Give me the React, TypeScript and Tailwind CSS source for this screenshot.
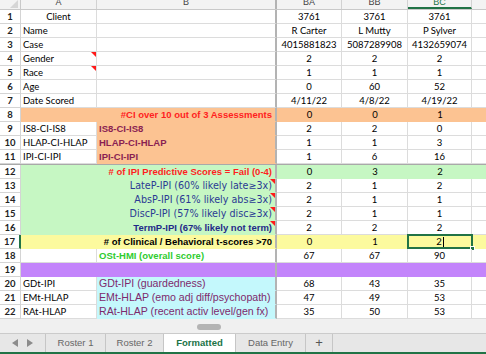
import React from 'react';

// column template: row numbers, A, B (frozen edge), BA, BB, BC, next column
const GRID = 'grid grid-cols-[21px_76px_180px_65px_66px_64px_1fr]';
const CAL = "font-['Lato',sans-serif]";
const ARL = "font-['Liberation_Sans',Arial,sans-serif]";

type Row = {
    n: number;
    a?: string;
    aCenter?: boolean;
    ab?: string; // text for merged A:B
    abCls?: string;
    abBg?: string;
    b?: string;
    bCls?: string;
    bBg?: string;
    fill?: string; // whole row background
    vals?: string[];
    triA?: boolean;
    triB?: boolean;
    sel?: boolean;
};

const NAVY = "text-[#2b3a93] font-['DejaVu_Sans',sans-serif] text-[9.6px]";
const MAROON = `text-[#7e2a6c] text-[10.6px] ${ARL}`;
const RED = `text-[#ff1f1f] font-bold ${ARL}`;
const PLUM = `text-[#8a1f52] font-bold ${ARL}`;

const rows: Row[] = [
    { n: 1, a: 'Client', aCenter: true, vals: ['3761', '3761', '3761'] },
    { n: 2, a: 'Name', vals: ['R Carter', 'L Mutty', 'P Sylver'] },
    { n: 3, a: 'Case', vals: ['4015881823', '5087289908', '4132659074'] },
    { n: 4, a: 'Gender', triA: true, vals: ['2', '2', '2'] },
    { n: 5, a: 'Race', triA: true, vals: ['1', '1', '1'] },
    { n: 6, a: 'Age', vals: ['0', '60', '52'] },
    { n: 7, a: 'Date Scored', vals: ['4/11/22', '4/8/22', '4/19/22'] },
    { n: 8, ab: '#CI over 10 out of 3 Assessments', abCls: RED, fill: 'bg-[#fcc392]', vals: ['0', '0', '1'] },
    { n: 9, a: 'IS8-CI-IS8', b: 'IS8-CI-IS8', bCls: PLUM, bBg: 'bg-[#fcc392]', vals: ['2', '2', '0'] },
    { n: 10, a: 'HLAP-CI-HLAP', b: 'HLAP-CI-HLAP', bCls: PLUM, bBg: 'bg-[#fcc392]', vals: ['1', '1', '3'] },
    { n: 11, a: 'IPI-CI-IPI', b: 'IPI-CI-IPI', bCls: PLUM, bBg: 'bg-[#fcc392]', vals: ['1', '6', '16'] },
    { n: 12, ab: '# of IPI Predictive Scores = Fail (0-4)', abCls: RED, fill: 'bg-[#c6f7c3]', vals: ['0', '3', '2'] },
    { n: 13, ab: 'LateP-IPI (60% likely late≥3x)', abCls: NAVY, abBg: 'bg-[#c6f7c3]', triB: true, vals: ['2', '1', '2'] },
    { n: 14, ab: 'AbsP-IPI (61% likely abs≥3x)', abCls: NAVY, abBg: 'bg-[#c6f7c3]', triB: true, vals: ['2', '1', '1'] },
    { n: 15, ab: 'DiscP-IPI (57% likely disc≥3x)', abCls: NAVY, abBg: 'bg-[#c6f7c3]', triB: true, vals: ['2', '1', '1'] },
    { n: 16, ab: 'TermP-IPI (67% likely not term)', abCls: `text-[#1f2a88] font-bold ${ARL}`, abBg: 'bg-[#c6f7c3]', triB: true, vals: ['2', '2', '2'] },
    { n: 17, ab: '# of Clinical / Behavioral t-scores >70', abCls: `text-black font-bold ${ARL}`, fill: 'bg-[#fcfa9e]', vals: ['0', '1', '2'], sel: true },
    { n: 18, b: 'OSt-HMI (overall score)', bCls: `text-[#2fcc2f] font-bold ${ARL}`, vals: ['67', '67', '90'] },
    { n: 19, fill: 'bg-[#c384fb]', ab: '' },
    { n: 20, a: 'GDt-IPI', b: 'GDt-IPI (guardedness)', bCls: MAROON, bBg: 'bg-[#c4f8fc]', vals: ['68', '43', '35'] },
    { n: 21, a: 'EMt-HLAP', b: 'EMt-HLAP (emo adj diff/psychopath)', bCls: MAROON, bBg: 'bg-[#c4f8fc]', vals: ['47', '49', '53'] },
    { n: 22, a: 'RAt-HLAP', b: 'RAt-HLAP (recent activ level/gen fx)', bCls: MAROON, bBg: 'bg-[#c4f8fc]', vals: ['35', '50', '53'] },
];

const Tri = () => (
    <div className="absolute right-0 top-0 w-0 h-0 border-t-[5px] border-l-[5px] border-t-[#ff1a1a] border-l-transparent" />
);

const SheetRow: React.FC<{ r: Row }> = ({ r }) => {
    const merged = r.ab !== undefined;
    const abBg = r.fill || r.abBg;
    return (
        <div className={`${GRID} h-[14px] text-[9.5px] leading-[13px]`}>
            <div className={`bg-white border-b border-[#d4d4d4] text-center font-bold text-[#222] ${CAL} ${r.sel ? 'border-r-2 border-r-[#217346]' : 'border-r'}`}>
                {r.n}
            </div>
            {merged ? (
                <div className={`relative col-span-2 border-b border-r-2 border-r-[#b3b3b3] text-right pr-[3px] whitespace-nowrap overflow-hidden ${r.abCls ?? ''} ${abBg ? `${abBg} border-b-transparent` : 'border-b-[#dcdcdc]'}`}>
                    {r.ab}
                    {r.triB && <Tri />}
                </div>
            ) : (
                <>
                    <div className={`relative border-b border-r border-[#dcdcdc] px-[2px] whitespace-nowrap text-black ${CAL} ${r.aCenter ? 'text-center' : ''}`}>
                        {r.a}
                        {r.triA && <Tri />}
                    </div>
                    <div className={`border-b border-r-2 border-r-[#b3b3b3] pl-[2px] whitespace-nowrap overflow-hidden ${r.bCls ?? ''} ${r.bBg ? `${r.bBg} border-b-transparent` : 'bg-white border-b-[#dcdcdc]'}`}>
                        {r.b}
                    </div>
                </>
            )}
            {[0, 1, 2].map((i) => (
                <div
                    key={i}
                    className={`relative text-center text-black whitespace-nowrap ${CAL} ${r.fill ? `${r.fill} border-b border-transparent` : 'bg-white border-b border-r border-[#dcdcdc]'}`}
                >
                    {r.sel && i === 2 ? (
                        <>
                            <span className="inline-flex items-center">
                                2<span className="inline-block w-px h-[10px] bg-black ml-px" />
                            </span>
                            <div className="absolute -left-px -top-px -right-px -bottom-px border-2 border-[#217346]" />
                            <div className="absolute -right-[3px] -bottom-[3px] w-[5px] h-[5px] bg-[#217346] border border-white" />
                        </>
                    ) : (
                        r.vals?.[i]
                    )}
                </div>
            ))}
            <div className={r.fill ? `${r.fill}` : 'bg-white border-b border-[#dcdcdc]'} />
        </div>
    );
};

const App: React.FC = () => {
    const headers = ['A', 'B', 'BA', 'BB', 'BC'];
    return (
        <div className="w-[486px] h-[354px] overflow-hidden bg-white flex flex-col select-none">
            {/* column header strip, cut at top */}
            <div className={`${GRID} h-[10px] bg-[#f3f3f3] border-b border-[#c9c9c9] overflow-hidden`}>
                <div className="border-r border-[#c9c9c9] flex items-end justify-end pr-[2px] pb-[1px]">
                    <div className="w-0 h-0 border-b-[8px] border-l-[8px] border-b-[#d6d6d6] border-l-transparent" />
                </div>
                {headers.map((h, i) => (
                    <div
                        key={h}
                        className={`text-center text-[9px] leading-[9px] ${ARL} ${i === 1 ? 'border-r-2 border-r-[#b3b3b3]' : 'border-r border-[#d2d2d2]'} ${h === 'BC' ? 'text-[#217346] border-b-2 border-b-[#217346]' : 'text-[#444]'}`}
                    >
                        <span className="block -mt-[2px]">{h}</span>
                    </div>
                ))}
                <div />
            </div>
            {rows.map((r) => (
                <React.Fragment key={r.n}>
                    <SheetRow r={r} />
                    {r.n === 11 && <div className="h-px bg-[#a9a9a9]" />}
                </React.Fragment>
            ))}
            {/* horizontal scrollbar area */}
            <div className="h-[14px] bg-[#f0f0f0] pl-[197px] pt-[5px]">
                <div className="w-[24px] h-[6px] rounded-full bg-[#b4b4b4]" />
            </div>
            {/* sheet tabs */}
            <div className={`flex h-[19px] bg-[#e7e7e7] border-t border-[#cbcbcb] text-[9.5px] ${ARL}`}>
                <div className="w-[45px] flex items-center justify-center gap-[9px]">
                    <svg width="6" height="8" viewBox="0 0 6 8"><path d="M6 0 L0 4 L6 8 Z" fill="#8c8c8c" /></svg>
                    <svg width="6" height="8" viewBox="0 0 6 8"><path d="M0 0 L6 4 L0 8 Z" fill="#8c8c8c" /></svg>
                </div>
                <div className="w-[60px] border-l border-[#c6c6c6] flex items-center justify-center text-[#666]">Roster 1</div>
                <div className="w-[58px] border-l border-[#c6c6c6] flex items-center justify-center text-[#666]">Roster 2</div>
                <div className="w-[72px] border-l border-[#c6c6c6] bg-white flex items-center justify-center text-[#217346] font-bold">Formatted</div>
                <div className="w-[70px] border-l border-[#c6c6c6] flex items-center justify-center text-[#666]">Data Entry</div>
                <div className="w-[28px] border-l border-r border-[#c6c6c6] flex items-center justify-center text-[#555] text-[13px]">+</div>
            </div>
            <div className="h-[2px] bg-[#217346]" />
        </div>
    );
};

export default App;
